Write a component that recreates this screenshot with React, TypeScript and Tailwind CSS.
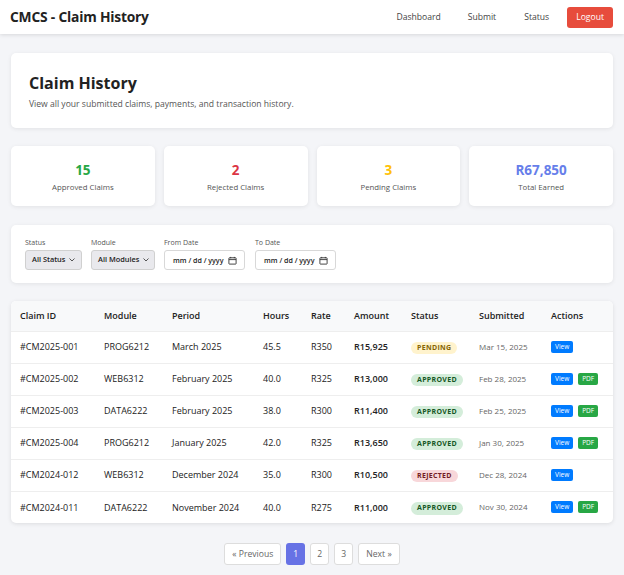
import React from "react";

type Row = {
  id: string;
  module: string;
  period: string;
  hours: string;
  rate: string;
  amount: string;
  status: "PENDING" | "APPROVED" | "REJECTED";
  submitted: string;
  pdf: boolean;
};

const rows: Row[] = [
  { id: "#CM2025-001", module: "PROG6212", period: "March 2025", hours: "45.5", rate: "R350", amount: "R15,925", status: "PENDING", submitted: "Mar 15, 2025", pdf: false },
  { id: "#CM2025-002", module: "WEB6312", period: "February 2025", hours: "40.0", rate: "R325", amount: "R13,000", status: "APPROVED", submitted: "Feb 28, 2025", pdf: true },
  { id: "#CM2025-003", module: "DATA6222", period: "February 2025", hours: "38.0", rate: "R300", amount: "R11,400", status: "APPROVED", submitted: "Feb 25, 2025", pdf: true },
  { id: "#CM2025-004", module: "PROG6212", period: "January 2025", hours: "42.0", rate: "R325", amount: "R13,650", status: "APPROVED", submitted: "Jan 30, 2025", pdf: true },
  { id: "#CM2024-012", module: "WEB6312", period: "December 2024", hours: "35.0", rate: "R300", amount: "R10,500", status: "REJECTED", submitted: "Dec 28, 2024", pdf: false },
  { id: "#CM2024-011", module: "DATA6222", period: "November 2024", hours: "40.0", rate: "R275", amount: "R11,000", status: "APPROVED", submitted: "Nov 30, 2024", pdf: true },
];

function Badge({ s }: { s: Row["status"] }) {
  if (s === "PENDING")
    return <span className="inline-block rounded-full bg-[#fff3cd] px-[6px] py-[1px] text-[7px] font-bold tracking-[0.3px] text-[#856404]">PENDING</span>;
  if (s === "APPROVED")
    return <span className="inline-block rounded-full bg-[#d4edda] px-[6px] py-[1px] text-[7px] font-bold tracking-[0.3px] text-[#155724]">APPROVED</span>;
  return <span className="inline-block rounded-full bg-[#f8d7da] px-[6px] py-[1px] text-[7px] font-bold tracking-[0.3px] text-[#721c24]">REJECTED</span>;
}

function Calendar() {
  return (
    <svg width="9" height="9" viewBox="0 0 10 10" fill="none" stroke="#333" strokeWidth="1">
      <rect x="1" y="2" width="8" height="7" rx="0.5" />
      <line x1="1" y1="4" x2="9" y2="4" />
      <line x1="3" y1="1" x2="3" y2="2.5" />
      <line x1="7" y1="1" x2="7" y2="2.5" />
    </svg>
  );
}

function Chevron() {
  return (
    <svg width="6" height="4" viewBox="0 0 6 4" fill="none" stroke="#444" strokeWidth="0.9">
      <polyline points="0.5,0.5 3,3 5.5,0.5" />
    </svg>
  );
}

export default function App() {
  return (
    <div className="min-h-[575px] w-[624px] bg-[#f4f5f8] text-[#333]" style={{ fontFamily: '"Open Sans", "Noto Sans", sans-serif' }}>
      <header className="flex h-[34px] items-center justify-between bg-white pl-[10px] pr-[11px] shadow-[0_1px_4px_rgba(0,0,0,0.12)]">
        <div className="text-[13.8px] font-bold tracking-[-0.2px] text-[#222]">CMCS - Claim History</div>
        <nav className="flex items-center text-[8.6px] text-[#444]">
          <span className="mr-[27px]">Dashboard</span>
          <span className="mr-[28px]">Submit</span>
          <span className="mr-[18px]">Status</span>
          <span className="flex h-[21px] items-center rounded-[3px] bg-[#e74c3c] px-[9px] text-white">Logout</span>
        </nav>
      </header>

      <main className="flex flex-col px-[11px] pt-[19px]">
        <section className="flex h-[75px] flex-col justify-center rounded-[5px] bg-white pl-[18px] shadow-[0_1px_4px_rgba(0,0,0,0.08)]">
          <h1 className="mt-[3px] text-[16px] font-bold leading-[20px] text-[#222]">Claim History</h1>
          <p className="mt-[5px] text-[8.6px] text-[#555]">View all your submitted claims, payments, and transaction history.</p>
        </section>

        <section className="mt-[18px] grid grid-cols-4 gap-[9px]">
          {[
            { v: "15", l: "Approved Claims", c: "text-[#28a745]" },
            { v: "2", l: "Rejected Claims", c: "text-[#dc3545]" },
            { v: "3", l: "Pending Claims", c: "text-[#ffc107]" },
            { v: "R67,850", l: "Total Earned", c: "text-[#667eea]" },
          ].map((s) => (
            <div key={s.l} className="flex h-[60px] flex-col items-center justify-center rounded-[5px] bg-white pt-[4px] shadow-[0_1px_4px_rgba(0,0,0,0.08)]">
              <div className={`text-[13.5px] font-bold leading-[16px] ${s.c}`}>{s.v}</div>
              <div className="mt-[4px] text-[7.8px] text-[#555]">{s.l}</div>
            </div>
          ))}
        </section>

        <section className="mt-[19px] flex h-[58px] items-center gap-[9px] rounded-[5px] bg-white pl-[14px] shadow-[0_1px_4px_rgba(0,0,0,0.08)]">
          <div className="flex flex-col">
            <span className="text-[7px] leading-[9px] text-[#555]">Status</span>
            <div className="mt-[3px] flex h-[20px] w-[57px] items-center justify-between rounded-[3px] border border-[#d0d0d0] bg-[#e9e9ed] pl-[6px] pr-[6px] text-[7.4px] font-semibold text-[#222]">
              <span>All Status</span>
              <Chevron />
            </div>
          </div>
          <div className="flex flex-col">
            <span className="text-[7px] leading-[9px] text-[#555]">Module</span>
            <div className="mt-[3px] flex h-[20px] w-[64px] items-center justify-between rounded-[3px] border border-[#d0d0d0] bg-[#e9e9ed] pl-[6px] pr-[5px] text-[7.4px] font-semibold text-[#222]">
              <span>All Modules</span>
              <Chevron />
            </div>
          </div>
          <div className="flex flex-col">
            <span className="text-[7px] leading-[9px] text-[#555]">From Date</span>
            <div className="mt-[3px] flex h-[20px] w-[81px] items-center justify-between rounded-[3px] border border-[#d8d8d8] bg-white pl-[8px] pr-[7px] text-[7.1px] font-semibold text-[#222]">
              <span>mm / dd / yyyy</span>
              <Calendar />
            </div>
          </div>
          <div className="ml-[1px] flex flex-col">
            <span className="text-[7px] leading-[9px] text-[#555]">To Date</span>
            <div className="mt-[3px] flex h-[20px] w-[81px] items-center justify-between rounded-[3px] border border-[#d8d8d8] bg-white pl-[8px] pr-[7px] text-[7.1px] font-semibold text-[#222]">
              <span>mm / dd / yyyy</span>
              <Calendar />
            </div>
          </div>
        </section>

        <section className="mt-[18px] overflow-hidden rounded-[5px] bg-white shadow-[0_1px_4px_rgba(0,0,0,0.1)]">
          <table className="w-full table-fixed border-collapse text-left text-[9px] text-[#222]">
            <colgroup>
              <col className="w-[93px]" />
              <col className="w-[68px]" />
              <col className="w-[91px]" />
              <col className="w-[48px]" />
              <col className="w-[43px]" />
              <col className="w-[57px]" />
              <col className="w-[68px]" />
              <col className="w-[72px]" />
              <col />
            </colgroup>
            <thead>
              <tr className="h-[30px] bg-[#f8f9fa]">
                {["Claim ID", "Module", "Period", "Hours", "Rate", "Amount", "Status", "Submitted", "Actions"].map((h, i) => (
                  <th key={h} className={`font-semibold ${i === 0 ? "pl-[9px]" : ""}`}>{h}</th>
                ))}
              </tr>
            </thead>
            <tbody>
              {rows.map((r) => (
                <tr key={r.id} className="h-[32px] border-t border-[#eeeeee]">
                  <td className="pl-[9px]">{r.id}</td>
                  <td>{r.module}</td>
                  <td>{r.period}</td>
                  <td>{r.hours}</td>
                  <td>{r.rate}</td>
                  <td className="font-semibold">{r.amount}</td>
                  <td><Badge s={r.status} /></td>
                  <td className="text-[8px] text-[#666]">{r.submitted}</td>
                  <td>
                    <div className="flex gap-[5px]">
                      <span className="rounded-[2px] bg-[#007bff] px-[4px] py-[1px] text-[6.5px] text-white">View</span>
                      {r.pdf && <span className="rounded-[2px] bg-[#28a745] px-[4px] py-[1px] text-[6.5px] text-white">PDF</span>}
                    </div>
                  </td>
                </tr>
              ))}
            </tbody>
          </table>
        </section>

        <nav className="mt-[20px] flex justify-center gap-[5px] text-[8.6px] text-[#666]">
          <span className="flex h-[22px] items-center rounded-[3px] border border-[#ddd] bg-white px-[7px]">« Previous</span>
          <span className="flex h-[22px] w-[19px] items-center justify-center rounded-[3px] bg-[#6772e5] text-white">1</span>
          <span className="flex h-[22px] w-[19px] items-center justify-center rounded-[3px] border border-[#ddd] bg-white">2</span>
          <span className="flex h-[22px] w-[19px] items-center justify-center rounded-[3px] border border-[#ddd] bg-white">3</span>
          <span className="flex h-[22px] items-center rounded-[3px] border border-[#ddd] bg-white px-[7px]">Next »</span>
        </nav>
      </main>
    </div>
  );
}
